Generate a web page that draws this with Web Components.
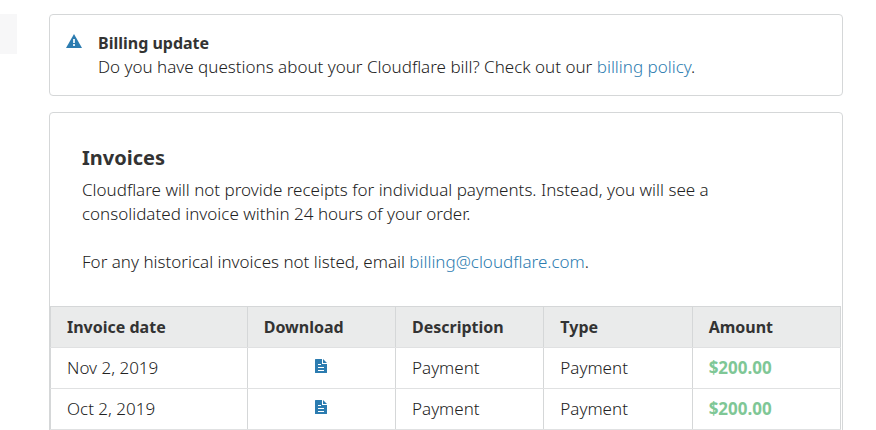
<!DOCTYPE html>
<html lang="en"><head><meta charset="utf-8"><title>Billing</title>
<style>
html{scrollbar-width:none}
body{margin:0;background:#fff;color:#222;font:300 17px/24px "Noto Sans","Open Sans",sans-serif}
</style></head><body>
<billing-page></billing-page>
<script>
const define=(name,html,setup)=>customElements.define(name,class extends HTMLElement{
  connectedCallback(){
    if(this.shadowRoot)return;
    const t=document.createElement('template');t.innerHTML=html;
    this.attachShadow({mode:'open'}).append(t.content.cloneNode(true));
    if(setup)setup(this,this.shadowRoot);
  }
});
define('text-link',`<style>:host{display:inline}a{color:#2c7cb0;text-decoration:none}</style><a><slot></slot></a>`,
  (el,root)=>root.querySelector('a').href=el.getAttribute('to'));
define('ui-card',`<style>:host{display:block;border:1px solid #d5d7d8;border-radius:4px;background:#fff}</style><slot></slot>`);
define('alert-note',`<style>
:host{display:flex;gap:16px;padding:16px}
svg{display:block;flex:none;margin-top:3px}
h2{margin:0;color:#333;font:700 16px/24px "Noto Sans",sans-serif}
p{margin:0}</style>
<svg width="16" height="14" viewBox="0 0 16 14" aria-hidden="true"><path fill="#2c7cb0" d="M8 0 16 14H0Z"/><path fill="#fff" fill-opacity=".85" d="M7 5h2v4H7ZM7 10h2v2H7Z"/></svg>
<div><h2><slot name="title"></slot></h2><p><slot></slot></p></div>`);
define('file-button',`<style>
:host{display:flex;justify-content:center;align-items:flex-start;height:24px}
button{display:block;border:0;padding:3px 0 0;background:none;cursor:pointer}
svg{display:block}</style>
<button type="button" aria-label="Download invoice"><svg width="12" height="14" viewBox="0 0 12 14" aria-hidden="true"><path fill="#2c7cb0" fill-rule="evenodd" d="M.6 0H7v5h5v8.4a.6.6 0 0 1-.6.6H.6a.6.6 0 0 1-.6-.6V.6A.6.6 0 0 1 .6 0ZM3 5v1h3V5ZM3 8v1h6V8ZM3 11v1h6v-1ZM8 0l4 4H8Z"/></svg></button>`);
define('invoice-table',`<style>
:host{display:block;padding:0 1px 32px 0}
table{width:100%;border-collapse:collapse;table-layout:fixed}
th,td{border:1px solid #d5d7d8;padding:8px 16px;text-align:left;line-height:24px}
td{border-bottom-color:#e0e1e2}
th{background:#eaebeb;color:#333;font:700 16px/24px "Noto Sans",sans-serif;border-bottom-color:#e0e1e2}
.first{width:24.9%}
.amount{color:#7fc796;font:700 17px/24px "Open Sans",sans-serif}
</style>
<table><colgroup><col class="first"><col span="4"></colgroup><thead><tr><th>Invoice date</th><th>Download</th><th>Description</th><th>Type</th><th>Amount</th></tr></thead>
<tbody><tr><td>Nov 2, 2019</td><td><file-button></file-button></td><td>Payment</td><td>Payment</td><td class="amount">$200.00</td></tr>
<tr><td>Oct 2, 2019</td><td><file-button></file-button></td><td>Payment</td><td>Payment</td><td class="amount">$200.00</td></tr></tbody></table>`);
define('invoice-panel',`<style>
:host{display:block}
header{padding:33px 32px 32px;max-width:660px}
h1{margin:0 0 8px;color:#333;font:700 20px/24px "Noto Sans",sans-serif}
p{margin:0 0 24px}p:last-child{margin:0}</style>
<header><h1>Invoices</h1><p>Cloudflare will not provide receipts for individual payments. Instead, you will see a consolidated invoice within 24 hours of your order.</p>
<p>For any historical invoices not listed, email <text-link to="mailto:billing@cloudflare.com">billing@cloudflare.com</text-link>.</p></header>
<invoice-table></invoice-table>`);
define('billing-page',`<style>
:host{display:flex;gap:32px;padding:14px 33px 32px 0}
aside{width:17px;height:40px;background:#f7f7f8;flex:none}
main{flex:1;display:grid;gap:16px}</style>
<aside></aside><main><ui-card><alert-note><span slot="title">Billing update</span>Do you have questions about your Cloudflare bill? Check out our <text-link to="#policy">billing policy</text-link>.</alert-note></ui-card>
<ui-card><invoice-panel></invoice-panel></ui-card></main>`);
</script></body></html>
